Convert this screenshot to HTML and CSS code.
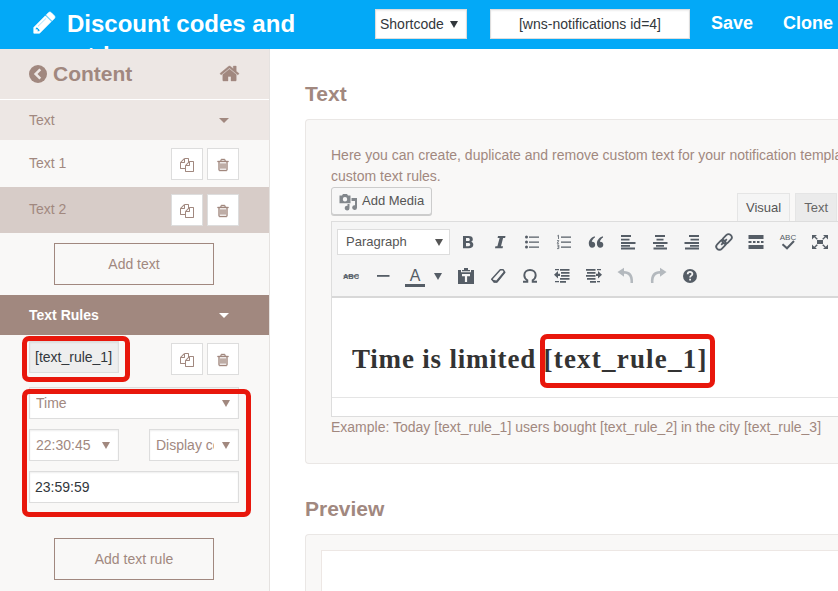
FILE: index.html
```html
<!DOCTYPE html>
<html lang="en">
<head>
  <meta charset="UTF-8" />
  <title>Notification editor</title>
  <meta name="viewport" content="width=device-width, initial-scale=1.0"/>
  <link rel="stylesheet" href="styles.css">
</head>
<body>

  <!-- Shared icons -->
  <svg class="sprite" width="0" height="0">
    <symbol id="copy" viewBox="0 0 1792 1792"><path d="M1696 384q40 0 68 28t28 68v1216q0 40-28 68t-68 28h-960q-40 0-68-28t-28-68v-288h-544q-40 0-68-28t-28-68v-672q0-40 20-88t48-76l408-408q28-28 76-48t88-20h416q40 0 68 28t28 68v328q68-40 128-40h416zm-544 213l-299 299h299v-299zm-640-384l-299 299h299v-299zm196 647l316-316v-416h-384v416q0 40-28 68t-68 28h-416v640h512v-256q0-40 20-88t48-76zm956 804v-1152h-384v416q0 40-28 68t-68 28h-416v640h896z"/></symbol>
    <symbol id="trash" viewBox="0 0 1792 1792"><path stroke="currentColor" stroke-width="50" d="M704 736v576q0 14-9 23t-23 9h-64q-14 0-23-9t-9-23v-576q0-14 9-23t23-9h64q14 0 23 9t9 23zm256 0v576q0 14-9 23t-23 9h-64q-14 0-23-9t-9-23v-576q0-14 9-23t23-9h64q14 0 23 9t9 23zm256 0v576q0 14-9 23t-23 9h-64q-14 0-23-9t-9-23v-576q0-14 9-23t23-9h64q14 0 23 9t9 23zm128 724v-948h-896v948q0 22 7 40.500t14.500 27 10.500 8.500h832q3 0 10.500-8.500t14.500-27 7-40.500zm-672-1076h448l-48-117q-7-9-17-11h-317q-10 2-17 11zm928 32v64q0 14-9 23t-23 9h-96v948q0 83-47 143.500t-113 60.500h-832q-66 0-113-58.500t-47-141.500v-952h-96q-14 0-23-9t-9-23v-64q0-14 9-23t23-9h309l70-167q15-37 54-63t79-26h320q40 0 79 26t54 63l70 167h309q14 0 23 9t9 23z"/></symbol>
  </svg>

  <header class="topbar">
    <svg class="pencil" viewBox="0 0 1792 1792"><path d="M491 1536l91-91-235-235-91 91v107h128v128h107zm523-928q0-22-22-22-10 0-17 7l-542 542q-7 7-7 17 0 22 22 22 10 0 17-7l542-542q7-7 7-17zm-54-192l416 416-832 832h-416v-416zm683 96q0 53-37 90l-166 166-416-416 166-165q36-38 90-38 53 0 91 38l235 234q37 39 37 91z"/></svg>
    <h1>Discount codes and<br>a td</h1>
    <div class="field code-type">Shortcode <i class="tri"></i></div>
    <div class="field code">[wns-notifications id=4]</div>
    <a class="action">Save</a>
    <a class="action">Clone</a>
  </header>

  <div class="layout">
    <aside class="sidebar">
      <div class="side-head">
        <svg class="back" viewBox="0 0 18 18"><circle cx="9" cy="9" r="9"/><path d="M11.300 4.300L6.600 9l4.700 4.700" fill="none" stroke="#ede7e4" stroke-width="2.500"/></svg>
        <h2>Content</h2>
        <svg class="home" viewBox="0 0 1792 1792"><path d="M1472 992v480q0 26-19 45t-45 19h-384v-384h-256v384h-384q-26 0-45-19t-19-45v-480q0-1 .5-3t.5-3l575-474 575 474q1 2 1 6zm223-69l-62 74q-8 9-21 11h-3q-13 0-21-7l-692-577-692 577q-12 8-24 7-13-2-21-11l-62-74q-8-10-7-23.500t11-21.500l719-599q32-26 76-26t76 26l244 204v-195q0-14 9-23t23-9h192q14 0 23 9t9 23v408l219 182q10 8 11 21.500t-7 23.500z"/></svg>
      </div>
      <div class="section">Text <i class="caret"></i></div>
      <div class="item first">
        <span>Text 1</span>
        <button class="icon-btn"><svg><use href="#copy"/></svg></button>
        <button class="icon-btn"><svg><use href="#trash"/></svg></button>
      </div>
      <div class="item active">
        <span>Text 2</span>
        <button class="icon-btn"><svg><use href="#copy"/></svg></button>
        <button class="icon-btn"><svg><use href="#trash"/></svg></button>
      </div>
      <button class="add">Add text</button>
      <div class="section open">Text Rules <i class="caret"></i></div>
      <div class="rules">
        <div class="rule-head">
          <div class="field rule-name">[text_rule_1]</div>
          <button class="icon-btn"><svg><use href="#copy"/></svg></button>
          <button class="icon-btn"><svg><use href="#trash"/></svg></button>
        </div>
        <div class="field select"><span>Time</span><i class="tri"></i></div>
        <div class="pair">
          <div class="field select"><span>22:30:45</span><i class="tri"></i></div>
          <div class="field select"><span>Display countdown</span><i class="tri"></i></div>
        </div>
        <div class="field value">23:59:59</div>
      </div>
      <button class="add last">Add text rule</button>
    </aside>

    <main>
      <h2>Text</h2>
      <section class="panel">
        <p>Here you can create, duplicate and remove custom text for your notification template<br>custom text rules.</p>
        <div class="media-row">
          <button class="media">
            <svg viewBox="0 0 18 18"><path fill-rule="evenodd" d="M1 2.500h2L4 1h4l1 1.500h2.500v7.700H.5V2.500zM6 4a2.200 2.200 0 1 0 0 4.400A2.200 2.200 0 1 0 6 4zM12.500 5H18v9.500a2.400 2.400 0 1 1-2-2.300V8h-3.500zM10.500 11v4a2.400 2.400 0 1 1-2-2.300V11z"/></svg>
            <span>Add Media</span>
          </button>
          <div class="tab on">Visual</div>
          <div class="tab">Text</div>
        </div>
        <div class="editor">
          <div class="toolbar">
            <div class="tools">
              <div class="format">Paragraph <i class="tri"></i></div>
              <svg class="t" viewBox="0 0 20 20"><path fill-rule="evenodd" d="M5 4h5.500c3 0 4.300 1.200 4.300 3.200 0 1.300-.7 2.200-1.900 2.600 1.500.3 2.400 1.400 2.400 2.900 0 2.300-1.600 3.500-4.600 3.500H5zm3 2v3h2c1.200 0 1.800-.5 1.800-1.500S11.200 6 10 6zm0 5v3.200h2.300c1.200 0 1.900-.5 1.900-1.600s-.7-1.600-2-1.600z"/></svg>
              <svg class="t" viewBox="0 0 20 20"><path d="M8 4h7.500l-.4 2h-2L11 14.200h2l-.4 2H5l.4-2h2L9.600 6h-2z"/></svg>
              <svg class="t" viewBox="0 0 20 20"><path d="M7 4.500h10v1.200H7zM7 9.500h10v1.200H7zM7 14.500h10v1.200H7z"/><circle cx="4.500" cy="5" r="1.500"/><circle cx="4.500" cy="10" r="1.500"/><circle cx="4.500" cy="15" r="1.500"/></svg>
              <svg class="t" viewBox="0 0 20 20"><path d="M7 4.500h10v1.200H7zM7 9.500h10v1.200H7zM7 14.500h10v1.200H7z"/><path class="ln" d="M3.300 4l1.200-.8V7M3 8.600h1.800l-1.600 2.700H5M3 13h1.800v3.600H3M3.400 14.800h1.400"/></svg>
              <svg class="t" viewBox="0 0 20 20"><path d="M8.700 4.200C5.500 5 2.800 8 2.800 11.600c0 2.600 1.300 4.200 3.300 4.200 1.800 0 3.100-1.300 3.100-3.100 0-1.700-1.200-2.900-2.900-2.900h-.5c.3-1.500 1.500-3.200 3.200-4.200zM16.800 4.200c-3.200.8-5.900 3.800-5.900 7.400 0 2.600 1.300 4.200 3.300 4.200 1.800 0 3.100-1.300 3.100-3.100 0-1.700-1.200-2.900-2.900-2.900h-.5c.3-1.500 1.500-3.200 3.200-4.200z"/></svg>
              <svg class="t" viewBox="0 0 20 20"><path d="M3 3h10v2H3zM3 6.700h8.500v1.800H3zM3 10h14.500v2H3zM3 13h9v1.800H3zM3 15.500h14v2H3z"/></svg>
              <svg class="t" viewBox="0 0 20 20"><path d="M5 3h10v2H5zM6.500 6.700h7v1.800h-7zM3 10h14.500v2H3zM6 13h8v1.800H6zM3.500 15.500H17v2H3.500z"/></svg>
              <svg class="t" viewBox="0 0 20 20"><path d="M7 3h10v2H7zM8.500 6.700H17v1.800H8.500zM2.500 10H17v2H2.500zM8 13h9v1.800H8zM3 15.500h14v2H3z"/></svg>
              <svg class="t" viewBox="0 0 20 20"><g transform="rotate(-45 10 10)" fill="none" stroke="#555d66" stroke-width="1.800"><rect x=".4" y="6.800" width="10.800" height="6.400" rx="3.200"/><rect x="8.800" y="6.800" width="10.800" height="6.400" rx="3.200"/><path d="M6 10h8"/></g></svg>
              <svg class="t" viewBox="0 0 20 20"><path d="M2.500 3h15v4h-15zM2.500 13h15v4h-15zM2.500 9h3v2h-3zM7 9h2.500v2H7zM11 9h2.500v2H11zM15 9h2.500v2H15z"/></svg>
              <svg class="t" viewBox="0 0 20 20"><text x="10" y="7.500" class="abc">ABC</text><path d="M4.500 12.300l4.500 4L16 9" fill="none" stroke="#555d66" stroke-width="2"/></svg>
              <svg class="t" viewBox="0 0 20 20"><path d="M7 8h6v4H7zM2 3h5L5.300 4.500l2.500 2.300-1 1-2.600-2.500L2 7.500zM18 3h-5l1.700 1.500-2.500 2.300 1 1 2.600-2.500L18 7.500zM2 17h5l-1.700-1.500 2.500-2.300-1-1-2.600 2.500L2 12.500zM18 17h-5l1.700-1.500-2.500-2.300 1-1 2.600 2.500 2.200-2.200z"/></svg>
            </div>
            <div class="tools">
              <svg class="t" viewBox="0 0 20 20"><text x="10" y="12.800" class="abc bold">ABC</text><path d="M2.500 9.500h15.500v1H2.500z"/></svg>
              <svg class="t" viewBox="0 0 20 20"><path d="M4 9h12.500v1.800H4z"/></svg>
              <div class="color"><span>A</span><i class="tri"></i></div>
              <svg class="t" viewBox="0 0 20 20"><path fill-rule="evenodd" d="M2 4h3v2.300h10V4h3v14H2zM6 4h2V2h4v2h2v1.300H6zM6 8v2.300h2.900V16h2.200v-5.700H14V8z"/></svg>
              <svg class="t" viewBox="0 0 20 20"><path d="M12.300 3.800h2.900l1.600 2.500-7.700 9.500H6.200l-2.500-2.500z" fill="none" stroke="#555d66" stroke-width="1.500" stroke-linejoin="round"/><path d="M3.500 13.500l4.800 1 8-9.500.8 1.600-8.200 10.100H5.800z"/></svg>
              <svg class="t" viewBox="0 0 20 20"><path d="M3 15.700h4.300v-1.500C5.500 13 4.300 11.300 4.300 9.200 4.300 6.300 6.600 4 10 4s5.700 2.300 5.700 5.200c0 2.100-1.200 3.800-3 5v1.500H17" fill="none" stroke="#555d66" stroke-width="1.900"/></svg>
              <svg class="t" viewBox="0 0 20 20"><path d="M8 3h9.500v1.800H8zM9 6h8.500v1.800H9zM9 9h8.500v1.800H9zM8 12h9.500v1.800H8zM8 15h6v1.800H8zM3 3h4v1.200H3zM3 15h4v1.200H3zM2 8.800L6 5v2.700h2v2.200H6v2.600z"/></svg>
              <svg class="t" viewBox="0 0 20 20"><path d="M2 3h9.500v1.800H2zM3 6h8.500v1.800H3zM2 9h9.500v1.800H2zM3 12h8.500v1.800H3zM6 15h6v1.800H6zM13 3h4v1.200h-4zM13 15h3v1.200h-3zM18 8.800L14 5v2.700h-2v2.200h2v2.600z"/></svg>
              <svg class="t off" viewBox="0 0 20 20"><path d="M1.500 6L8 1.800v3.100c6 0 9.700 3.600 9 12.100h-2.500c.4-6.600-2-9.200-6.500-9.200v3z"/></svg>
              <svg class="t off" viewBox="0 0 20 20"><path d="M18.500 6L12 1.800v3.100c-6 0-9.700 3.600-9 12.100h2.500c-.4-6.600 2-9.200 6.500-9.200v3z"/></svg>
              <svg class="t" viewBox="0 0 20 20"><circle cx="10" cy="10" r="7"/><path d="M7.700 8.200c0-3 4.700-2.900 4.700-.2 0 1.600-2.300 1.700-2.300 3.500M10.100 12.700v1.800" fill="none" stroke="#f5f5f5" stroke-width="1.800"/></svg>
            </div>
          </div>
          <div class="content">Time is limited <span class="rule-tag">[text_rule_1]</span></div>
          <div class="status"></div>
        </div>
        <p>Example: Today [text_rule_1] users bought [text_rule_2] in the city [text_rule_3]</p>
      </section>
      <h2 class="preview-title">Preview</h2>
      <section class="panel preview"><div></div></section>
    </main>
  </div>

  <!-- Highlights over the fields -->
  <div class="mark mark-name"></div>
  <div class="mark mark-settings"></div>
  <div class="mark mark-tag"></div>

</body>
</html>
```
FILE: styles.css
```css
* { margin: 0; padding: 0; box-sizing: border-box; }
body {
  width: 838px;
  height: 591px;
  overflow: hidden;
  position: relative;
  background: #fff;
  color: #a1887f;
  font: 14px/21px "Liberation Sans", Arial, sans-serif;
}
svg { fill: currentColor; flex: none; }
.sprite { position: absolute; }
button { font: inherit; color: inherit; }
h2 { font-size: 21px; line-height: 26px; }

/* Top bar */
.topbar {
  display: flex;
  height: 49px;
  padding-left: 32px;
  overflow: hidden;
  background: #03a9f7;
  color: #fff;
}
.pencil { width: 25px; height: 25px; margin-top: 10px; stroke: currentColor; stroke-width: 50; }
h1 {
  width: 308px;
  margin: 8px 0 0 10px;
  font-size: 24px;
  line-height: 32px;
}
.field {
  display: flex;
  align-items: center;
  height: 32px;
  border: 1px solid #ddd;
  background: #fff;
  box-shadow: inset 0 1px 2px rgba(0, 0, 0, .07);
  white-space: nowrap;
}
.topbar .field { height: 30px; margin-top: 9px; color: #32373c; flex: none; }
.code-type { width: 92px; padding: 0 8px 0 4px; justify-content: space-between; }
.code { width: 200px; margin-left: 23px; justify-content: center; }
.action {
  margin: 13px 0 0 21px;
  font-size: 18px;
  font-weight: bold;
}
.action + .action { margin-left: 30px; }
.tri {
  flex: none;
  border: 4px solid transparent;
  border-top: 7px solid;
  border-bottom: 0;
}

/* Sidebar */
.layout { display: flex; height: 542px; overflow: hidden; }
.sidebar {
  width: 270px;
  flex: none;
  background: #f9f8f7;
  border-right: 1px solid #e5e2e0;
}
.side-head {
  display: flex;
  align-items: center;
  height: 51px;
  padding: 0 30px 1px 29px;
  background: #ede7e4;
  border-bottom: 1px solid #fff;
}
.back { width: 18px; height: 18px; margin-right: 6px; }
.home { width: 21px; height: 21px; margin: 0 -1px 0 auto; stroke: currentColor; stroke-width: 30; }
.section {
  display: flex;
  align-items: center;
  justify-content: space-between;
  height: 40px;
  padding: 0 40px 0 29px;
  background: #ede7e4;
}
.caret {
  border: 5px solid transparent;
  border-top-color: currentColor;
  border-bottom: 0;
}
.open { background: #a1887f; color: #fff; font-weight: bold; }
.item {
  display: flex;
  gap: 4px;
  height: 46px;
  padding: 7px 30px 0 29px;
}
.item.first { height: 47px; padding-top: 8px; }
.item span { flex: 1; padding-top: 5px; }
.active { background: #d7ccc8; }
.icon-btn {
  display: flex;
  align-items: center;
  justify-content: center;
  width: 32px;
  height: 32px;
  background: #fff;
  border: 1px solid #ddd;
}
.icon-btn svg { width: 14px; height: 14px; margin-top: 2px; }
.add {
  display: block;
  width: 160px;
  height: 42px;
  margin: 10px 0 10px 54px;
  background: none;
  border: 1px solid #a1887f;
}
.rules { padding: 6px 30px 0 29px; }
.rule-head { display: flex; gap: 4px; height: 36px; margin-bottom: 10px; }
.rule-head .icon-btn { margin-top: 2px; }
.rule-name { width: 90px; margin-right: auto; padding-left: 5px; background: #eee; color: #32373c; }
.select { padding: 0 8px 0 6px; margin-bottom: 10px; }
.select span { flex: 1; min-width: 0; overflow: hidden; margin-right: 8px; }
.pair { display: flex; justify-content: space-between; }
.pair .field { width: 90px; }
.value { padding-left: 5px; color: #32373c; }
.last { margin-top: 35px; }

/* Main column */
main { flex: 1; min-width: 0; padding: 32px 0 0 35px; }
.panel {
  height: 345px;
  margin-top: 12px;
  padding: 25px 0 25px 25px;
  background: #f9f8f7;
  border: 1px solid #eae7e5;
  border-right: 0;
  border-radius: 4px 0 0 4px;
}
.panel p { white-space: nowrap; overflow: hidden; }
.media-row { display: flex; height: 34px; color: #555; font-size: 13px; }
.media {
  display: flex;
  align-items: center;
  gap: 5px;
  flex: none;
  width: 101px;
  height: 28px;
  margin-right: 305px;
  padding-left: 7px;
  background: #f7f7f7;
  border: 1px solid #ccc;
  border-radius: 3px;
  box-shadow: 0 1px 0 #ccc;
  white-space: nowrap;
}
.media svg { width: 18px; height: 18px; color: #82878c; margin-top: 2px; }
.media span { margin-top: -2px; }
.tab {
  height: 28px;
  margin: 6px 5px 0 0;
  padding: 3px 8px 0;
  background: #ebebeb;
  border: 1px solid #e5e5e5;
  border-bottom: 0;
  color: #666;
}
.tab:last-child { margin-right: 0; }
.tab.on { background: #f5f5f5; color: #555; }
.editor { border: 1px solid #ddd; border-right: 0; background: #fff; height: 196px; }
.toolbar {
  height: 76px;
  padding: 3px 0 0 3px;
  background: #f5f5f5;
  border-bottom: 2px solid #d8d8d8;
  color: #555d66;
}
.tools { display: flex; align-items: center; height: 34px; }
.format {
  display: flex;
  align-items: center;
  justify-content: space-between;
  flex: none;
  width: 113px;
  height: 26px;
  margin: 0 2px 0 2px;
  padding: 0 6px 2px 8px;
  background: #fff;
  border: 1px solid #ddd;
  color: #555;
  font-size: 13px;
}
.format .tri { margin-top: 2px; }
.t { width: 20px; height: 20px; margin: 0 6px; }
.tools .t:last-child { margin-right: 0; }
.off { color: #b4b9be; }
.ln { fill: none; stroke: currentColor; stroke-width: .8; }
.abc { font-size: 8px; text-anchor: middle; }
.bold { font-weight: bold; font-size: 7.5px; }
.color { display: flex; width: 51px; align-items: center; gap: 9px; padding-left: 6px; }
.color span {
  width: 20px;
  height: 19px;
  margin-top: 2px;
  border-bottom: 3px solid #555d66;
  text-align: center;
  font-size: 16px;
  line-height: 16px;
}
.content {
  height: 99px;
  padding: 46px 0 0 20px;
  color: #333;
  font: bold 27px/30px "Liberation Serif", Georgia, serif;
  letter-spacing: .8px;
  white-space: nowrap;
}
.rule-tag { letter-spacing: 1.2px; }
.status { height: 20px; border-top: 1px solid #e5e5e5; }
.preview-title { margin-top: 32px; }
.preview { height: 57px; padding: 15px 0 0 15px; border-bottom: 0; border-radius: 4px 0 0 0; }
.preview div { height: 41px; background: #fff; border: solid #ede7e4; border-width: 1px 0 0 1px; }

/* Highlights */
.mark { position: absolute; border: 5px solid #e8170c; border-radius: 7px; }
.mark-name { left: 22px; top: 336px; width: 108px; height: 46px; }
.mark-settings { left: 22px; top: 389px; width: 229px; height: 128px; }
.mark-tag { left: 540px; top: 334px; width: 175px; height: 54px; }
```
